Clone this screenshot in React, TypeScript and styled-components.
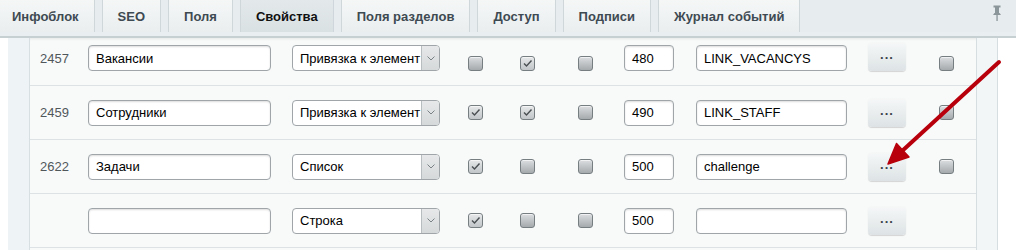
import styled, { createGlobalStyle } from "styled-components";

const Global = createGlobalStyle`
  html, body {
    margin: 0;
    padding: 0;
    background: #ffffff;
    font-family: "Liberation Sans", Arial, sans-serif;
    overflow: hidden;
  }
`;

const Page = styled.div`
  position: relative;
  width: 1016px;
  height: 250px;
  overflow: hidden;
  display: flex;
  flex-direction: column;
`;

const TabBar = styled.div`
  height: 32px;
  display: flex;
  align-items: stretch;
  gap: 7px;
  background: #e7ecee;
  padding-right: 14px;
`;

const Tab = styled.div<{ $active?: boolean }>`
  display: flex;
  align-items: center;
  padding: 0 15px;
  font-size: 13px;
  font-weight: bold;
  color: ${(p) => (p.$active ? "#111" : "#3e4a52")};
  background: ${(p) =>
    p.$active
      ? "linear-gradient(#e3e9eb, #dae1e3)"
      : "linear-gradient(#f5f7f7, #eaeeef)"};
  border-left: 1px solid #d0d7da;
  border-right: 1px solid #d0d7da;
  &:first-child {
    border-left: none;
    padding-left: 12px;
  }
`;

const Spacer = styled.div`
  flex: 1;
`;

const Pin = styled.div`
  display: flex;
  align-items: flex-start;
  padding-top: 5px;
`;

const Band = styled.div`
  height: 4px;
  background: #e9eef0;
  border-bottom: 2px solid #c6cfd2;
`;

const Body = styled.div`
  flex: 1;
  display: flex;
  padding-left: 8px;
`;

const Strip = styled.div`
  width: 21px;
  background: #eef3f5;
  border-right: 1px solid #d7dfe2;
`;

const Table = styled.div`
  width: 946px;
  background: #f8f9f9;
  box-shadow: inset 0 3px 3px -2px rgba(0, 0, 0, 0.08);
`;

const RightStrip = styled.div`
  width: 20px;
  background: #f2f6f7;
  border-left: 1px solid #d6dee1;
  border-right: 1px solid #d6dee1;
`;

const Row = styled.div<{ $first?: boolean }>`
  display: grid;
  grid-template-columns: 58px 204px 176px 52px 58px 46px 72px 172px 71px auto;
  align-items: ${(p) => (p.$first ? "end" : "center")};
  height: ${(p) => (p.$first ? "33px" : "53px")};
  padding-bottom: ${(p) => (p.$first ? "14px" : "0")};
  border-bottom: 1px solid #dde2e4;
`;

const Id = styled.div`
  height: 26px;
  display: flex;
  align-items: center;
  padding-left: 10px;
  font-size: 13px;
  color: #50575b;
`;

const Field = styled.div<{ $w: number }>`
  box-sizing: border-box;
  width: ${(p) => p.$w}px;
  height: 26px;
  border: 1px solid #9fa5a9;
  border-radius: 4px;
  background: #fff;
  box-shadow: inset 0 1px 2px rgba(0, 0, 0, 0.14);
  font-size: 13px;
  color: #000;
  display: flex;
  align-items: center;
  padding-left: 7px;
  white-space: nowrap;
`;

const Select = styled.div`
  box-sizing: border-box;
  width: 148px;
  height: 26px;
  border: 1px solid #9fa5a9;
  border-radius: 4px;
  background: #fff;
  display: flex;
  overflow: hidden;
  font-size: 13px;
  color: #000;
`;

const SelectText = styled.div`
  flex: 1;
  display: flex;
  align-items: center;
  padding-left: 7px;
  white-space: nowrap;
`;

const SelectArrow = styled.div`
  width: 17px;
  background: linear-gradient(#e6e8e9, #d6d9da);
  border-left: 1px solid #b8bdc0;
  display: flex;
  align-items: center;
  justify-content: center;
`;

const Check = styled.div<{ $on?: boolean }>`
  box-sizing: border-box;
  width: 15px;
  height: 15px;
  border: 1px solid #767e82;
  border-radius: 3px;
  background: ${(p) =>
    p.$on
      ? "linear-gradient(#e6e8e9, #c2c6c8)"
      : "linear-gradient(#dcdee0, #a5aaad)"};
  box-shadow: inset 0 1px 0 rgba(255, 255, 255, 0.6);
  display: flex;
  align-items: center;
  justify-content: center;
`;

const Dots = styled.div`
  box-sizing: border-box;
  width: 38px;
  height: 29px;
  border-radius: 4px;
  background: linear-gradient(#f6f8f8, #dde3e5);
  box-shadow: 0 1px 1px rgba(0, 0, 0, 0.15);
  display: flex;
  align-items: center;
  justify-content: center;
  font-size: 13px;
  font-weight: bold;
  color: #3a4349;
  letter-spacing: 1px;
  padding-bottom: 4px;
`;

const Arrow = styled.svg`
  position: absolute;
  left: 0;
  top: 0;
  pointer-events: none;
`;

const tabs = [
  "Инфоблок",
  "SEO",
  "Поля",
  "Свойства",
  "Поля разделов",
  "Доступ",
  "Подписи",
  "Журнал событий",
];

type Prop = {
  id: string;
  name: string;
  type: string;
  c1: boolean;
  c2: boolean;
  c3: boolean;
  sort: string;
  code: string;
  del: boolean | null;
};

const rows: Prop[] = [
  { id: "2457", name: "Вакансии", type: "Привязка к элемент", c1: false, c2: true, c3: false, sort: "480", code: "LINK_VACANCYS", del: false },
  { id: "2459", name: "Сотрудники", type: "Привязка к элемент", c1: true, c2: true, c3: false, sort: "490", code: "LINK_STAFF", del: false },
  { id: "2622", name: "Задачи", type: "Список", c1: true, c2: false, c3: false, sort: "500", code: "challenge", del: false },
  { id: "", name: "", type: "Строка", c1: true, c2: false, c3: false, sort: "500", code: "", del: null },
];

function Tick() {
  return (
    <svg width="11" height="11" viewBox="0 0 11 11">
      <path d="M2 5.5 L4.5 8 L9.5 2.5" fill="none" stroke="#4a4f52" strokeWidth="1.4" />
    </svg>
  );
}

function Box({ on }: { on: boolean }) {
  return <Check $on={on}>{on && <Tick />}</Check>;
}

export default function App() {
  return (
    <Page>
      <Global />
      <TabBar>
        {tabs.map((t) => (
          <Tab key={t} $active={t === "Свойства"}>
            {t}
          </Tab>
        ))}
        <Spacer />
        <Pin>
          <svg width="10" height="16" viewBox="0 0 10 16">
            <rect x="1.5" y="0.5" width="7" height="2" fill="#8b969b" />
            <rect x="3" y="2" width="4" height="6" fill="#8b969b" />
            <path d="M1 10 L2.5 8 L7.5 8 L9 10 Z" fill="#8b969b" />
            <rect x="4.4" y="10" width="1.3" height="6" fill="#8b969b" />
          </svg>
        </Pin>
      </TabBar>
      <Band />
      <Body>
        <Strip />
        <Table>
          {rows.map((r, i) => (
            <Row key={i} $first={i === 0}>
              <Id>{r.id}</Id>
              <Field $w={183}>{r.name}</Field>
              <Select>
                <SelectText>{r.type}</SelectText>
                <SelectArrow>
                  <svg width="8" height="5" viewBox="0 0 8 5">
                    <path d="M0.5 0.5 L4 4 L7.5 0.5" fill="none" stroke="#7b8285" strokeWidth="1" />
                  </svg>
                </SelectArrow>
              </Select>
              <Box on={r.c1} />
              <Box on={r.c2} />
              <Box on={r.c3} />
              <Field $w={50}>{r.sort}</Field>
              <Field $w={151}>{r.code}</Field>
              <Dots>...</Dots>
              {r.del !== null ? <Box on={r.del} /> : <span />}
            </Row>
          ))}
        </Table>
        <RightStrip />
      </Body>
      <Arrow width="1016" height="250" viewBox="0 0 1016 250">
        <line x1="999" y1="62" x2="901" y2="152" stroke="#b8000c" strokeWidth="4" strokeLinecap="round" />
        <path d="M888 164 L896.5 143.5 L909 157 Z" fill="#b8000c" stroke="#b8000c" strokeWidth="1.5" strokeLinejoin="round" />
      </Arrow>
    </Page>
  );
}
